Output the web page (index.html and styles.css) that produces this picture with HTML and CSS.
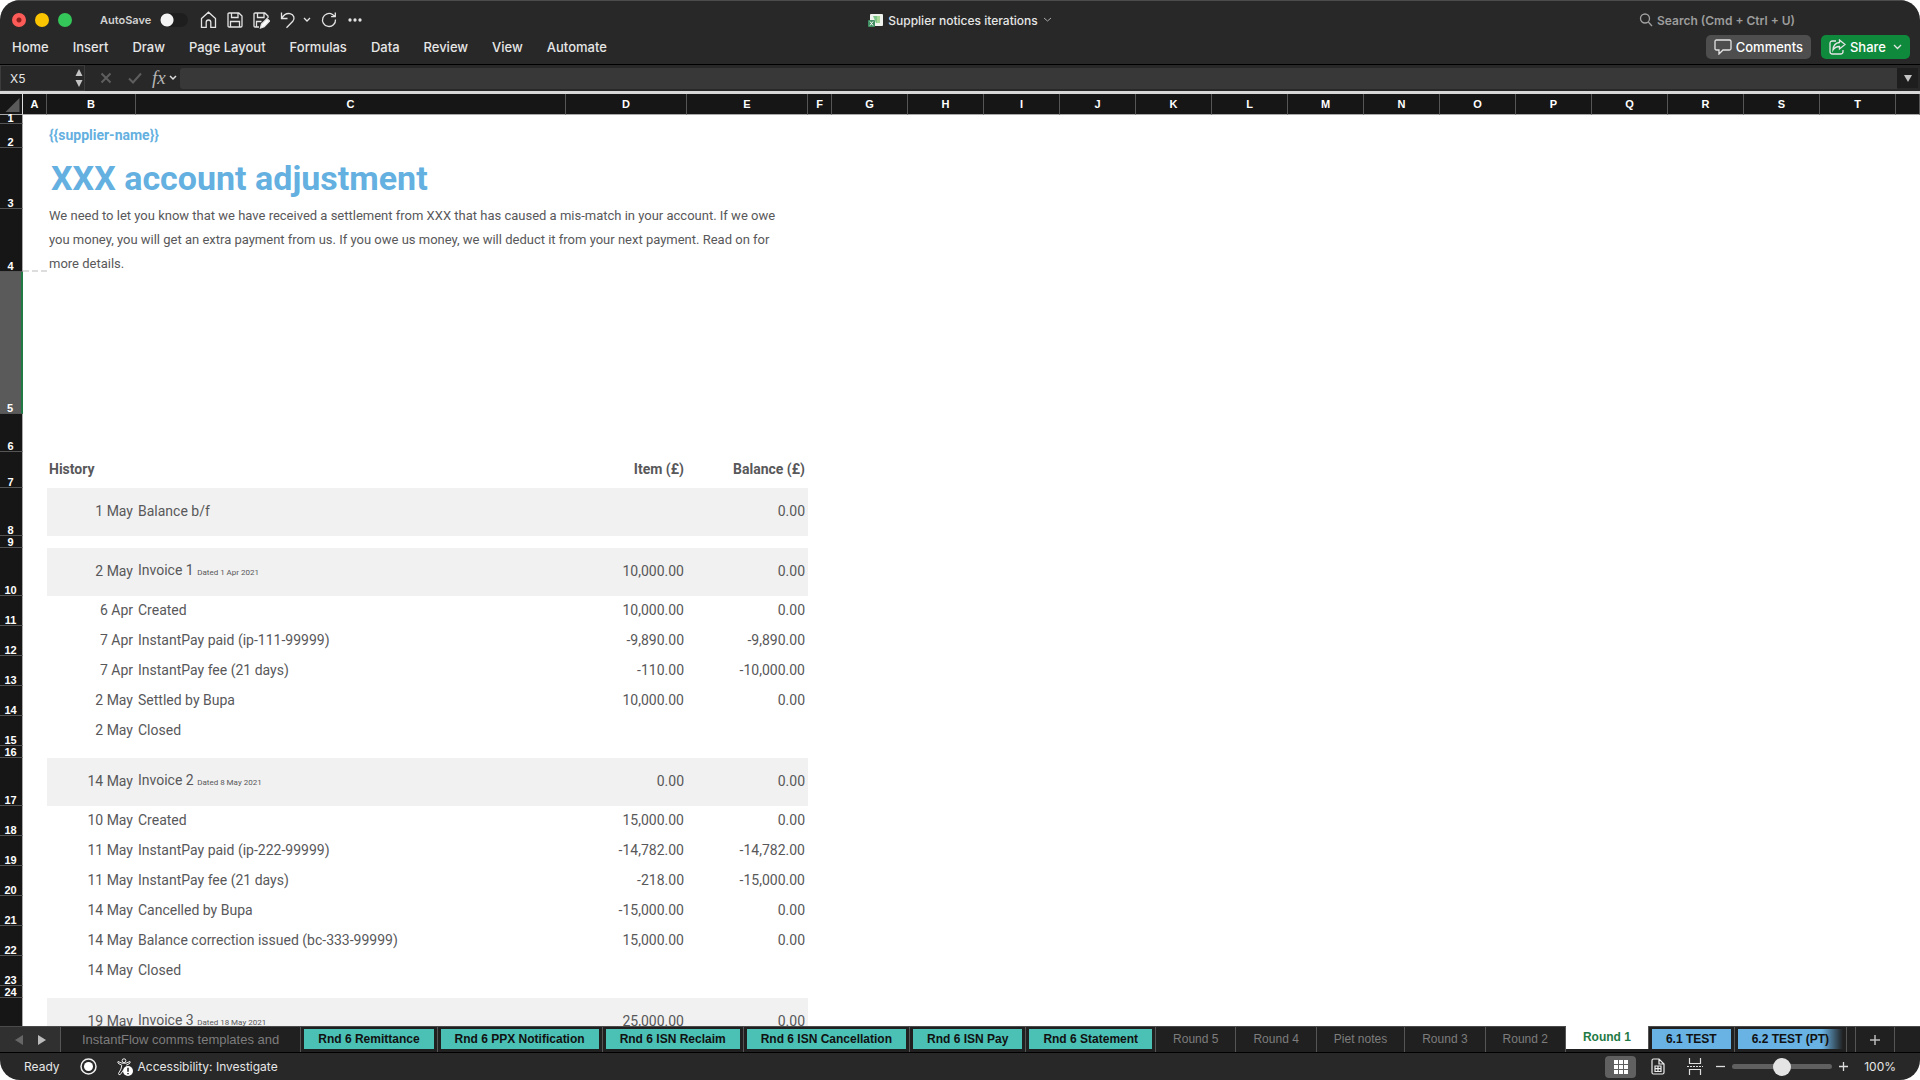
FILE: index.html
```html
<!DOCTYPE html>
<html lang="en">
<head>
  <meta charset="UTF-8">
  <meta name="viewport" content="width=device-width, initial-scale=1.0">
  <title>Supplier notices iterations</title>
  <link rel="stylesheet" href="styles.css">
</head>
<body>
  <div class="window">
    <header class="app-header">
      <div class="titlebar">
        <div class="titlebar-left">
          <div class="lights">
            <button type="button" class="light light-close" aria-label="Close"></button>
            <button type="button" class="light light-min" aria-label="Minimise"></button>
            <button type="button" class="light light-max" aria-label="Full screen"></button>
          </div>
          <label class="autosave">AutoSave <input type="checkbox" class="switch"></label>
          <div class="quick">
            <button type="button" aria-label="Home"><svg width="17" height="18" viewBox="0 0 17 18"><path d="M1.5 7.5 8.5 1.2l7 6.3v8.8h-4.7v-5a2.3 2.3 0 0 0-4.6 0v5H1.5z"/></svg></button>
            <button type="button" aria-label="Save"><svg width="16" height="16" viewBox="0 0 16 16"><path d="M1 2.2Q1 1 2.2 1h9.6L15 4v9.8q0 1.2-1.2 1.2H2.2Q1 15 1 13.800zM4.500 1v4.500h6.500V1M3.500 15V9.500h9V15"/></svg></button>
            <button type="button" aria-label="Save as"><svg width="17" height="17" viewBox="0 0 17 17"><path d="M6 15H2.200Q1 15 1 13.800V2.200Q1 1 2.200 1h9.600L15 4v2M4.500 1v4.500h6.500V1M3.500 15V9.500h5"/><path class="solid" d="m7.500 16 1-4 5.500-5.300 2.600 2.400-5.400 5.700z"/></svg></button>
            <button type="button" aria-label="Undo"><svg width="16" height="18" viewBox="0 0 16 18"><path d="M1.500 1.500v6h6M1.800 7.200C4 3.500 7 2 10 2.700c4 .9 5.200 4.800 2.800 7.600L6.500 16.700"/></svg></button>
            <button type="button" class="quick-more" aria-label="Undo history"><svg width="8" height="6" viewBox="0 0 8 6"><path d="m1 1 3 3 3-3"/></svg></button>
            <button type="button" aria-label="Redo"><svg width="16" height="16" viewBox="0 0 16 16"><path d="M14.500 7.500A6.500 6.500 0 1 1 11.500 2.500L14 4.500M14.300.5v4.200h-4.200"/></svg></button>
            <button type="button" aria-label="More"><svg width="16" height="4" viewBox="0 0 16 4"><g class="solid"><circle cx="3" cy="2" r="1"/><circle cx="8" cy="2" r="1"/><circle cx="13" cy="2" r="1"/></g></svg></button>
          </div>
        </div>
        <button type="button" class="doc-title">
          <svg width="15" height="15" viewBox="0 0 15 15"><rect x="2" y="1" width="13" height="12" rx="1" fill="#eef3ee"/><path d="M5 3h7v7H8z" fill="#7ec58a"/><path d="M9 3h3v7H9z" fill="#a9d99a"/><rect y="7" width="7" height="7" rx="1" fill="#3f8f62"/><path d="m2 8.500 3 4M5 8.500l-3 4" stroke="#fff"/></svg>
          Supplier notices iterations
          <svg width="9" height="6" viewBox="0 0 9 6"><path d="m1 1 3.500 3L8 1" fill="none" stroke="#aaa"/></svg>
        </button>
        <label class="search">
          <svg width="14" height="14" viewBox="0 0 14 14"><circle cx="6" cy="5.500" r="4.500"/><path d="m9.300 9 3.700 4"/></svg>
          <input type="text" placeholder="Search (Cmd + Ctrl + U)" aria-label="Search">
        </label>
      </div>

      <div class="ribbon">
        <nav class="ribbon-tabs">
          <a href="#">Home</a>
          <a href="#">Insert</a>
          <a href="#">Draw</a>
          <a href="#">Page Layout</a>
          <a href="#">Formulas</a>
          <a href="#">Data</a>
          <a href="#">Review</a>
          <a href="#">View</a>
          <a href="#">Automate</a>
        </nav>
        <div class="ribbon-actions">
          <button type="button" class="btn">
            <svg width="18" height="16" viewBox="0 0 18 16"><path d="M2.500 1h13q1.500 0 1.500 1.500v7q0 1.500-1.500 1.500H9l-4 4v-4H2.500Q1 11 1 9.500v-7Q1 1 2.500 1z"/></svg>
            Comments
          </button>
          <button type="button" class="btn btn-share">
            <svg width="17" height="16" viewBox="0 0 17 16"><path d="M7 2H3.500Q1 2 1 4.500v8Q1 15 3.500 15h8q2.500 0 2.500-2.500V11M10.500 1l5.500 4.500-5.500 4.500V7.500Q6.500 7.300 4 11 4.500 4 10.500 3.500z"/></svg>
            Share
            <svg class="btn-arrow" width="9" height="6" viewBox="0 0 9 6"><path d="m1 1 3.500 3.500L8 1"/></svg>
          </button>
        </div>
      </div>
    </header>

    <div class="formula-bar">
      <div class="name-box">
        <input type="text" value="X5" aria-label="Name box">
        <svg width="8" height="20" viewBox="0 0 8 20"><path d="m4 1 3.500 7h-7zM4 19l3.500-7h-7z" fill="#c4c4c4"/></svg>
      </div>
      <div class="formula-tools">
        <button type="button" aria-label="Cancel"><svg width="12" height="12" viewBox="0 0 12 12"><path d="m1.500 1.500 9 9M10.500 1.500l-9 9" stroke="#5e5e5e" stroke-width="2"/></svg></button>
        <button type="button" aria-label="Enter"><svg width="14" height="12" viewBox="0 0 14 12"><path d="m1 6.500 4 4 8-9" fill="none" stroke="#5e5e5e" stroke-width="2"/></svg></button>
        <button type="button" class="fx">fx <svg width="8" height="6" viewBox="0 0 8 6"><path d="m1 1 3 3 3-3" fill="none" stroke="#ddd" stroke-width="1.500"/></svg></button>
      </div>
      <input type="text" class="formula-input" aria-label="Formula">
      <button type="button" class="formula-expand" aria-label="Expand formula bar"><svg width="8" height="7" viewBox="0 0 8 7"><path d="M0 0h8L4 7z" fill="#c4c4c4"/></svg></button>
    </div>

    <main class="sheet">
      <table>
        <colgroup>
          <col class="col-num"><col class="col-gap"><col class="col-date"><col class="col-desc"><col class="col-money"><col class="col-money"><col class="col-gap">
          <col span="14" class="col-std"><col>
        </colgroup>
        <thead>
          <tr>
            <th class="corner"><svg width="15" height="14" viewBox="0 0 15 15"><path d="M15 0v15H0z" fill="#5a5a5a"/></svg></th>
            <th>A</th><th>B</th><th>C</th><th>D</th><th>E</th><th>F</th><th>G</th><th>H</th><th>I</th><th>J</th><th>K</th><th>L</th><th>M</th><th>N</th><th>O</th><th>P</th><th>Q</th><th>R</th><th>S</th><th>T</th><th></th>
          </tr>
        </thead>
        <tbody>
          <tr class="row-min"><th>1</th></tr>
          <tr class="row-supplier"><th>2</th><td></td><td colspan="4" class="supplier">{{supplier-name}}</td></tr>
          <tr class="row-title"><th>3</th><td></td><td colspan="4"><h1>XXX account adjustment</h1></td></tr>
          <tr class="row-intro"><th>4</th><td class="marquee"></td><td colspan="4"><p>We need to let you know that we have received a settlement from XXX that has caused a mis-match in your account. If we owe<br>you money, you will get an extra payment from us. If you owe us money, we will deduct it from your next payment. Read on for<br>more details.</p></td></tr>
          <tr class="row-blank selected"><th>5</th></tr>
          <tr class="row-space"><th>6</th></tr>
          <tr class="row-head"><th>7</th><td></td><td colspan="2">History</td><td class="num">Item (£)</td><td class="num">Balance (£)</td></tr>
          <tr class="band"><th>8</th><td></td><td class="date">1 May</td><td>Balance b/f</td><td></td><td class="num">0.00</td></tr>
          <tr class="row-thin"><th>9</th></tr>
          <tr class="band"><th>10</th><td></td><td class="date">2 May</td><td>Invoice 1 <small>Dated 1 Apr 2021</small></td><td class="num">10,000.00</td><td class="num">0.00</td></tr>
          <tr><th>11</th><td></td><td class="date">6 Apr</td><td>Created</td><td class="num">10,000.00</td><td class="num">0.00</td></tr>
          <tr><th>12</th><td></td><td class="date">7 Apr</td><td>InstantPay paid (ip-111-99999)</td><td class="num">-9,890.00</td><td class="num">-9,890.00</td></tr>
          <tr><th>13</th><td></td><td class="date">7 Apr</td><td>InstantPay fee (21 days)</td><td class="num">-110.00</td><td class="num">-10,000.00</td></tr>
          <tr><th>14</th><td></td><td class="date">2 May</td><td>Settled by Bupa</td><td class="num">10,000.00</td><td class="num">0.00</td></tr>
          <tr><th>15</th><td></td><td class="date">2 May</td><td>Closed</td></tr>
          <tr class="row-thin"><th>16</th></tr>
          <tr class="band"><th>17</th><td></td><td class="date">14 May</td><td>Invoice 2 <small>Dated 8 May 2021</small></td><td class="num">0.00</td><td class="num">0.00</td></tr>
          <tr><th>18</th><td></td><td class="date">10 May</td><td>Created</td><td class="num">15,000.00</td><td class="num">0.00</td></tr>
          <tr><th>19</th><td></td><td class="date">11 May</td><td>InstantPay paid (ip-222-99999)</td><td class="num">-14,782.00</td><td class="num">-14,782.00</td></tr>
          <tr><th>20</th><td></td><td class="date">11 May</td><td>InstantPay fee (21 days)</td><td class="num">-218.00</td><td class="num">-15,000.00</td></tr>
          <tr><th>21</th><td></td><td class="date">14 May</td><td>Cancelled by Bupa</td><td class="num">-15,000.00</td><td class="num">0.00</td></tr>
          <tr><th>22</th><td></td><td class="date">14 May</td><td>Balance correction issued (bc-333-99999)</td><td class="num">15,000.00</td><td class="num">0.00</td></tr>
          <tr><th>23</th><td></td><td class="date">14 May</td><td>Closed</td></tr>
          <tr class="row-thin"><th>24</th></tr>
          <tr class="band"><th></th><td></td><td class="date">19 May</td><td>Invoice 3 <small>Dated 18 May 2021</small></td><td class="num">25,000.00</td><td class="num">0.00</td></tr>
        </tbody>
      </table>
    </main>

    <nav class="sheet-tabs">
      <div class="tab-nav">
        <button type="button" aria-label="Previous sheet"><svg width="8" height="10" viewBox="0 0 8 10"><path d="M8 0v10L0 5z" fill="#666"/></svg></button>
        <button type="button" aria-label="Next sheet"><svg width="8" height="10" viewBox="0 0 8 10"><path d="M0 0v10l8-5z" fill="#bbb"/></svg></button>
      </div>
      <a href="#" class="tab tab-first"><span>InstantFlow comms templates and</span></a>
      <a href="#" class="tab teal"><span>Rnd 6 Remittance</span></a>
      <a href="#" class="tab teal"><span>Rnd 6 PPX Notification</span></a>
      <a href="#" class="tab teal"><span>Rnd 6 ISN Reclaim</span></a>
      <a href="#" class="tab teal"><span>Rnd 6 ISN Cancellation</span></a>
      <a href="#" class="tab teal"><span>Rnd 6 ISN Pay</span></a>
      <a href="#" class="tab teal"><span>Rnd 6 Statement</span></a>
      <a href="#" class="tab"><span>Round 5</span></a>
      <a href="#" class="tab"><span>Round 4</span></a>
      <a href="#" class="tab"><span>Piet notes</span></a>
      <a href="#" class="tab"><span>Round 3</span></a>
      <a href="#" class="tab"><span>Round 2</span></a>
      <a href="#" class="tab active"><span>Round 1</span></a>
      <a href="#" class="tab blue"><span>6.1 TEST</span></a>
      <a href="#" class="tab blue fade"><span>6.2 TEST (PT)</span></a>
      <button type="button" class="tab-add" aria-label="Add sheet"><svg width="10" height="10" viewBox="0 0 10 10"><path d="M5 0v10M0 5h10" stroke="#bbb" stroke-width="1.500"/></svg></button>
    </nav>

    <footer class="status">
      <div class="status-left">
        <span>Ready</span>
        <svg width="17" height="17" viewBox="0 0 17 17"><circle cx="8.500" cy="8.500" r="7.500" fill="none" stroke="#eee" stroke-width="1.500"/><circle cx="8.500" cy="8.500" r="4.500" fill="#fff"/></svg>
        <button type="button" class="access">
          <svg width="16" height="18" viewBox="0 0 16 18"><g fill="none" stroke="#eee"><circle cx="7" cy="2.700" r="1.900"/><path d="M1 3.500q-.8 1.500 1 2.300l2.800 1.400L4 11l-2.500 4.500q0 1.800 1.800 1L6.500 12M13 3.500q.8 1.500-1 2.300L9.200 7.200M1 3.500l4 1.700h4l4-1.700"/></g><circle cx="11" cy="13" r="5" fill="#fff"/><path d="M11 9.800v4M11 15v1.300" stroke="#222" stroke-width="1.500"/></svg>
          Accessibility: Investigate
        </button>
      </div>
      <div class="status-right">
        <button type="button" class="view-btn on" aria-label="Normal view"><svg width="14" height="14" viewBox="0 0 14 14"><path d="M0 0h4v4H0zM5 0h4v4H5zM10 0h4v4h-4zM0 5h4v4H0zM5 5h4v4H5zM10 5h4v4h-4zM0 10h4v4H0zM5 10h4v4H5zM10 10h4v4h-4z" fill="#fff"/></svg></button>
        <button type="button" class="view-btn" aria-label="Page layout"><svg width="14" height="17" viewBox="0 0 14 17"><path d="M2.500 1H8l5 5v8.500q0 1.500-1.500 1.500h-9Q1 16 1 14.500v-12Q1 1 2.500 1zM8 1v5h5M4 8h6v5.500H4zM4 10.700h6M7 8v5.500" fill="none" stroke="#eee" stroke-width="1.200"/></svg></button>
        <button type="button" class="view-btn" aria-label="Page break preview"><svg width="16" height="17" viewBox="0 0 16 17"><path d="M2.500 0v5.500h11V0M2.500 17v-5.500h11V17" fill="none" stroke="#ddd" stroke-width="1.200"/><path d="M0 8.500h16" stroke="#ddd" stroke-dasharray="2 1"/></svg></button>
        <div class="zoom">
          <button type="button" aria-label="Zoom out"><svg width="9" height="9" viewBox="0 0 9 9"><path d="M0 4.500h9" stroke="#ddd" stroke-width="1.300"/></svg></button>
          <input type="range" min="0" max="100" value="50" aria-label="Zoom">
          <button type="button" aria-label="Zoom in"><svg width="9" height="9" viewBox="0 0 9 9"><path d="M0 4.500h9M4.500 0v9" stroke="#ddd" stroke-width="1.300"/></svg></button>
        </div>
        <span class="zoom-value">100%</span>
      </div>
    </footer>
  </div>
</body>
</html>
```
FILE: styles.css
```css
* {
  margin: 0;
  padding: 0;
  box-sizing: border-box;
}

body {
  background-color: #fff;
  font-family: Inter, Roboto, sans-serif;
  font-size: 12px;
  color: #e6e6e6;
}

button,
input {
  font: inherit;
  color: inherit;
  background: none;
  border: none;
  outline: none;
}

button {
  display: flex;
  align-items: center;
  white-space: nowrap;
}

a {
  color: inherit;
  text-decoration: none;
}

svg {
  display: block;
  flex: none;
}

.window {
  height: 100vh;
  display: flex;
  flex-direction: column;
  border-radius: 20px;
  overflow: hidden;
}

/* title bar and ribbon */
.app-header {
  background-color: #282828;
  border-top: 1px solid #4c4c4c;
  border-bottom: 1px solid #000;
  padding: 5px 10px 4px;
}

.titlebar {
  display: grid;
  grid-template-columns: 1fr auto 1fr;
  align-items: center;
  height: 28px;
}

.titlebar-left,
.lights,
.autosave,
.quick {
  display: flex;
  align-items: center;
}

.lights {
  gap: 9px;
  padding-left: 2px;
}

.light {
  width: 14px;
  height: 14px;
  border-radius: 50%;
}

.light-close {
  background: radial-gradient(circle, #8c1f1c 2px, #fc5b57 3px);
}

.light-min {
  background-color: #fbc400;
}

.light-max {
  background-color: #34c658;
}

.autosave {
  margin-left: 28px;
  gap: 9px;
  font-size: 11px;
  font-weight: 600;
  color: #d2d2d2;
}

.switch {
  appearance: none;
  width: 28px;
  height: 14px;
  border-radius: 7px;
  background: radial-gradient(circle at 7px 7px, #f4f4f4 6px, #1e1e1e 7px);
}

.quick {
  margin-left: 12px;
  gap: 10px;
}

.quick-more {
  margin-left: -3px;
}

.quick svg,
.search svg,
.btn svg {
  fill: none;
  stroke: #e4e4e4;
  stroke-width: 1.3;
}

.quick .solid {
  fill: #fff;
}

.doc-title {
  gap: 5px;
  font-weight: 500;
}

.search {
  justify-self: end;
  display: flex;
  align-items: center;
  gap: 4px;
  padding-right: 81px;
}

.search svg {
  stroke: #a0a0a0;
}

.search input {
  width: 172px;
  font-weight: 600;
}

.search input::placeholder {
  color: #9c9c9c;
}

.ribbon {
  display: flex;
  justify-content: space-between;
  align-items: center;
  height: 26px;
}

.ribbon-tabs {
  display: flex;
  gap: 24px;
  padding-left: 2px;
  font-size: 13px;
  font-weight: 500;
}

.ribbon-actions {
  display: flex;
  gap: 10px;
}

.btn {
  gap: 4px;
  height: 24px;
  padding: 0 8px;
  border-radius: 5px;
  background-color: #4e4e4e;
  font-size: 13px;
  font-weight: 500;
  color: #fff;
}

.btn-share {
  background-color: #0f8a3c;
}

.btn-arrow {
  margin-left: 3px;
}

/* formula bar */
.formula-bar {
  display: flex;
  align-items: center;
  height: 29px;
  background-color: #282828;
  border-bottom: 3px solid #d8d8d8;
}

.name-box {
  display: flex;
  align-items: center;
  width: 85px;
  height: 26px;
  padding: 0 1px 0 9px;
  border: 1px solid #3c3c3c;
}

.name-box input {
  flex: 1;
  min-width: 0;
}

.formula-tools {
  display: flex;
  align-items: center;
  gap: 16px;
  padding: 0 3px 0 15px;
}

.fx {
  gap: 3px;
  margin-left: -6px;
  font-family: "Liberation Serif", serif;
  font-size: 19px;
  line-height: 20px;
  font-style: italic;
  color: #b4b4b4;
}

.formula-input {
  flex: 1;
  height: 21px;
  background-color: #383838;
  border-radius: 3px 0 0 3px;
}

.formula-expand {
  width: 21px;
  height: 20px;
  margin-right: 2px;
  justify-content: center;
  background-color: #1e1e1e;
}

/* grid */
.sheet {
  flex: 1;
  min-height: 0;
  overflow: hidden;
  background-color: #fff;
}

table {
  width: 100%;
  table-layout: fixed;
  border-spacing: 0;
  font-family: Roboto, sans-serif;
  font-size: 14px;
  line-height: 20px;
  color: #58585a;
}

.col-num {
  width: 23px;
}

.col-gap {
  width: 24px;
}

.col-date {
  width: 89px;
}

.col-desc {
  width: 430px;
}

.col-money {
  width: 121px;
}

.col-std {
  width: 76px;
}

th {
  font-family: "Liberation Sans", Arial, sans-serif;
  font-size: 11px;
  font-weight: bold;
  color: #fff;
  background-color: #161616;
}

thead th {
  height: 21px;
  border-right: 1px solid #555;
  border-bottom: 1px solid #aaa;
}

thead .corner {
  padding: 4px 2px 2px 5px;
  border-right-color: #ddd;
}

tbody th {
  height: 30px;
  padding: 0 1px 1px 0;
  line-height: 7px;
  vertical-align: bottom;
  border-right: 1px solid #aaa;
  border-bottom: 1px solid #555;
}

td {
  padding: 0 3px 2px 2px;
  white-space: nowrap;
}

.row-min th {
  height: 9px;
}

.row-thin th {
  height: 12px;
}

.row-supplier th {
  height: 24px;
}

.row-title th {
  height: 61px;
}

.row-intro th {
  height: 63px;
}

.row-blank th {
  height: 142px;
}

.row-space th {
  height: 38px;
}

.row-head th {
  height: 36px;
}

.band th {
  height: 48px;
}

.selected th {
  background-color: #5a5a5a;
  border-right: 2px solid #1f7a45;
}

.supplier {
  font-weight: bold;
  color: #64b0e0;
}

h1 {
  padding-left: 2px;
  font-size: 34px;
  line-height: 40px;
  color: #64b0e0;
}

/* three lines centred on a row slightly shorter than they are */
.row-intro p {
  display: flex;
  align-items: center;
  height: 60px;
  font-size: 13px;
  line-height: 24px;
}

.marquee {
  border-bottom: 2px dashed #ddd;
}

.row-head td {
  font-weight: bold;
}

.band td:nth-child(n+3) {
  background-color: #f1f1f1;
}

.date,
.num {
  text-align: right;
}

small {
  font-size: 8px;
}

/* sheet tabs */
.sheet-tabs {
  display: flex;
  height: 27px;
  background-color: #202020;
  border-top: 1px solid #4a4a4a;
  border-bottom: 1px solid #000;
  font-family: "Liberation Sans", Arial, sans-serif;
  font-size: 12px;
  color: #7d7d7d;
}

.tab-nav {
  display: flex;
  align-items: center;
  gap: 15px;
  width: 61px;
  padding-left: 15px;
  background-color: #303030;
  border-right: 1px solid #555;
}

.tab {
  display: flex;
  padding: 2px 3px 3px;
  border-right: 1px solid #555;
  white-space: nowrap;
}

.tab span {
  display: flex;
  align-items: center;
  padding: 0 14px;
}

.tab-first span {
  padding: 0 18px;
  font-size: 13px;
}

.teal span,
.blue span {
  font-weight: bold;
  color: #111;
}

.teal span {
  background-color: #4bc0b5;
}

.blue span {
  background-color: #68b2e4;
}

.fade span {
  background: linear-gradient(to right, #68b2e4 80%, #202020);
}

.active {
  margin-top: -1px;
  margin-bottom: 3px;
  background-color: #fff;
  color: #1f7a45;
  font-weight: bold;
}

.tab-add {
  width: 40px;
  margin-left: 8px;
  justify-content: center;
  border-left: 1px solid #555;
  border-right: 1px solid #555;
}

/* status bar */
.status {
  display: flex;
  justify-content: space-between;
  align-items: center;
  height: 27px;
  padding: 0 24px;
  background-color: #282828;
}

.status-left,
.status-right,
.zoom {
  display: flex;
  align-items: center;
}

.status-left {
  gap: 20px;
}

.access {
  gap: 5px;
}

.status-right {
  gap: 6px;
}

.view-btn {
  width: 31px;
  height: 22px;
  justify-content: center;
  border-radius: 4px;
}

.on {
  background-color: #606060;
}

.zoom {
  gap: 7px;
}

.zoom input {
  appearance: none;
  width: 100px;
  height: 5px;
  border-radius: 3px;
  background-color: #606060;
}

.zoom input::-webkit-slider-thumb {
  appearance: none;
  width: 18px;
  height: 18px;
  border-radius: 50%;
  background-color: #e4e4e4;
}

.zoom-value {
  margin-left: 10px;
}
```
